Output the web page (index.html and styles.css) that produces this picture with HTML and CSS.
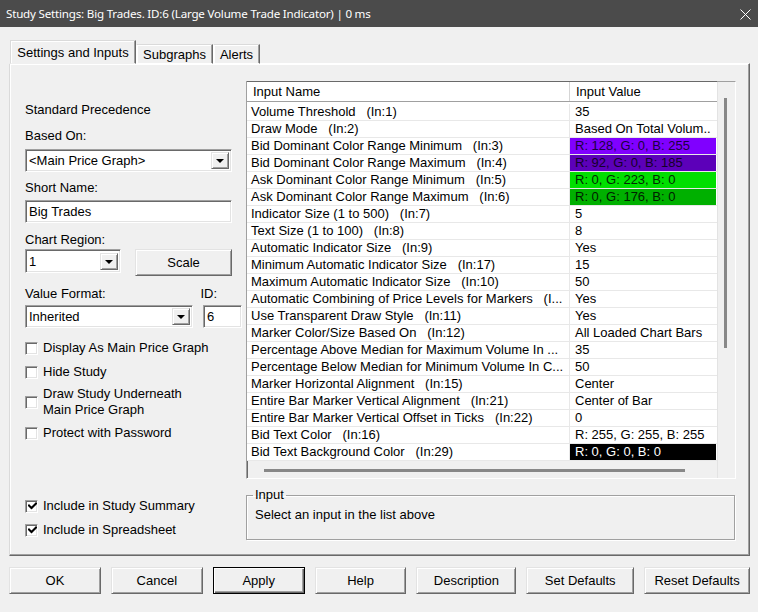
FILE: index.html
```html
<!DOCTYPE html>
<html>
<head>
<meta charset="utf-8">
<link rel="stylesheet" href="styles.css">
</head>
<body>
<div class="titlebar">
  <span class="title">Study Settings: Big Trades. ID:6 (Large Volume Trade Indicator) | 0 ms</span>
  <svg class="close" width="11" height="11" viewBox="0 0 11 11"><path d="M0.5 0.5 L10.5 10.5 M10.5 0.5 L0.5 10.5" stroke="#ffffff" stroke-width="1" fill="none"/></svg>
</div>
<div class="main">
  <div class="tabs">
    <div class="tab active w-settings">Settings and Inputs</div>
    <div class="tab w-subgraphs">Subgraphs</div>
    <div class="tab w-alerts">Alerts</div>
  </div>
  <div class="panel">
    <div class="leftcol">
      <div class="lbl precedence">Standard Precedence</div>
      <div class="lbl mt10">Based On:</div>
      <div class="select w-full mt5 h23"><span>&lt;Main Price Graph&gt;</span><i class="arrow"></i></div>
      <div class="lbl mt8">Short Name:</div>
      <div class="field w-full mt4 h23">Big Trades</div>
      <div class="lbl mt9">Chart Region:</div>
      <div class="row gaprow mt1">
        <div class="select w-region h24"><span>1</span><i class="arrow"></i></div>
        <div class="btn w-scale">Scale</div>
      </div>
      <div class="row mt10 lblrow">
        <div class="lbl">Value Format:</div>
        <div class="lbl idlbl">ID:</div>
      </div>
      <div class="row mt3">
        <div class="select w-format h23"><span>Inherited</span><i class="arrow"></i></div>
        <div class="field w-id h23">6</div>
      </div>
      <label class="cb mt12"><i class="box"></i><span>Display As Main Price Graph</span></label>
      <label class="cb mt8"><i class="box"></i><span>Hide Study</span></label>
      <label class="cb mt6"><i class="box"></i><span>Draw Study Underneath<br>Main Price Graph</span></label>
      <label class="cb mt7"><i class="box"></i><span>Protect with Password</span></label>
      <label class="cb mt57"><i class="box"><svg width="9" height="9" viewBox="0 0 9 9"><path d="M1 3.5 L3.5 6 L8 1.5" stroke="#000" stroke-width="2" fill="none" stroke-linecap="square"/></svg></i><span>Include in Study Summary</span></label>
      <label class="cb mt8"><i class="box"><svg width="9" height="9" viewBox="0 0 9 9"><path d="M1 3.5 L3.5 6 L8 1.5" stroke="#000" stroke-width="2" fill="none" stroke-linecap="square"/></svg></i><span>Include in Spreadsheet</span></label>
    </div>
    <div class="rightcol">
      <div class="list">
        <div class="listmain">
          <div class="hdr">
            <div class="c-name">Input Name</div>
            <div class="c-val">Input Value</div>
          </div>
          <div class="rows">
            <div class="r"><div class="c-name">Volume Threshold   (In:1)</div><div class="c-val">35</div></div>
            <div class="r"><div class="c-name">Draw Mode   (In:2)</div><div class="c-val">Based On Total Volum..</div></div>
            <div class="r"><div class="c-name">Bid Dominant Color Range Minimum   (In:3)</div><div class="c-val sw-purple">R: 128, G: 0, B: 255</div></div>
            <div class="r"><div class="c-name">Bid Dominant Color Range Maximum   (In:4)</div><div class="c-val sw-dpurple">R: 92, G: 0, B: 185</div></div>
            <div class="r"><div class="c-name">Ask Dominant Color Range Minimum   (In:5)</div><div class="c-val sw-green">R: 0, G: 223, B: 0</div></div>
            <div class="r"><div class="c-name">Ask Dominant Color Range Maximum   (In:6)</div><div class="c-val sw-dgreen">R: 0, G: 176, B: 0</div></div>
            <div class="r"><div class="c-name">Indicator Size (1 to 500)   (In:7)</div><div class="c-val">5</div></div>
            <div class="r"><div class="c-name">Text Size (1 to 100)   (In:8)</div><div class="c-val">8</div></div>
            <div class="r"><div class="c-name">Automatic Indicator Size   (In:9)</div><div class="c-val">Yes</div></div>
            <div class="r"><div class="c-name">Minimum Automatic Indicator Size   (In:17)</div><div class="c-val">15</div></div>
            <div class="r"><div class="c-name">Maximum Automatic Indicator Size   (In:10)</div><div class="c-val">50</div></div>
            <div class="r"><div class="c-name">Automatic Combining of Price Levels for Markers   (I...</div><div class="c-val">Yes</div></div>
            <div class="r"><div class="c-name">Use Transparent Draw Style   (In:11)</div><div class="c-val">Yes</div></div>
            <div class="r"><div class="c-name">Marker Color/Size Based On   (In:12)</div><div class="c-val">All Loaded Chart Bars</div></div>
            <div class="r"><div class="c-name">Percentage Above Median for Maximum Volume In ...</div><div class="c-val">35</div></div>
            <div class="r"><div class="c-name">Percentage Below Median for Minimum Volume In C...</div><div class="c-val">50</div></div>
            <div class="r"><div class="c-name">Marker Horizontal Alignment   (In:15)</div><div class="c-val">Center</div></div>
            <div class="r"><div class="c-name">Entire Bar Marker Vertical Alignment   (In:21)</div><div class="c-val">Center of Bar</div></div>
            <div class="r"><div class="c-name">Entire Bar Marker Vertical Offset in Ticks   (In:22)</div><div class="c-val">0</div></div>
            <div class="r"><div class="c-name">Bid Text Color   (In:16)</div><div class="c-val">R: 255, G: 255, B: 255</div></div>
            <div class="r"><div class="c-name">Bid Text Background Color   (In:29)</div><div class="c-val sw-black">R: 0, G: 0, B: 0</div></div>
          </div>
          <div class="hscroll"><div class="hthumb"></div></div>
        </div>
        <div class="vscroll"><div class="vthumb"></div></div>
      </div>
      <fieldset class="group">
        <legend>Input</legend>
        <div class="grouptext">Select an input in the list above</div>
      </fieldset>
    </div>
  </div>
  <div class="buttons">
    <div class="btn w92">OK</div>
    <div class="btn w92">Cancel</div>
    <div class="btn w92 default">Apply</div>
    <div class="btn w92">Help</div>
    <div class="btn w100">Description</div>
    <div class="btn w108">Set Defaults</div>
    <div class="btn w106">Reset Defaults</div>
  </div>
</div>
</body>
</html>
```

FILE: styles.css
```css
html, body {
  margin: 0;
  padding: 0;
}
body {
  width: 758px;
  height: 612px;
  overflow: hidden;
  background: #f0f0f0;
  font-family: "Liberation Sans", Arial, sans-serif;
  font-size: 13px;
  color: #000;
}
.titlebar {
  height: 27px;
  background: #4b4b4b;
  color: #fff;
  display: flex;
  align-items: center;
  justify-content: space-between;
  padding: 0 7px 0 6px;
  box-sizing: border-box;
}
.title {
  font-family: "Noto Sans", "Open Sans", sans-serif;
  font-size: 11.6px;
  letter-spacing: -0.2px;
  white-space: nowrap;
}
.close {
  display: block;
  margin-top: 1px;
}
.main {
  padding: 14px 8px 0 9px;
}
.tabs {
  display: flex;
  align-items: flex-end;
  height: 23px;
  padding-left: 1px;
  margin-bottom: -1px;
  position: relative;
  z-index: 1;
}
.tab {
  box-sizing: border-box;
  height: 20px;
  line-height: 20px;
  text-align: center;
  border-top: 1px solid #dadada;
  border-left: 1px solid #ffffff;
  border-right: 1px solid #696969;
  background: #f0f0f0;
  box-shadow: inset -1px 0 0 #a0a0a0, inset 1px 1px 0 #ffffff;
  border-bottom: 1px solid #ffffff;
  white-space: nowrap;
}
.tab.active {
  height: 24px;
  line-height: 23px;
  border-bottom: 1px solid #f0f0f0;
  border-left-color: #dadada;
}
.w-settings { width: 126px; }
.w-subgraphs { width: 77px; }
.w-alerts { width: 47px; }
.panel {
  box-sizing: border-box;
  width: 741px;
  height: 493px;
  border: 1px solid;
  border-color: #ffffff #696969 #696969 #dadada;
  box-shadow: inset -1px -1px 0 #a0a0a0, inset 1px 1px 0 #ffffff;
  display: grid;
  grid-template-columns: 217px 490px;
  column-gap: 4px;
  padding: 17px 0 0 15px;
  align-items: start;
}
.leftcol {
  display: flex;
  flex-direction: column;
}
.lbl {
  line-height: 16px;
  white-space: nowrap;
}
.precedence { margin-top: 21px; }
.mt1 { margin-top: 1px; }
.mt3 { margin-top: 3px; }
.mt4 { margin-top: 4px; }
.mt5 { margin-top: 5px; }
.mt6 { margin-top: 6px; }
.mt7 { margin-top: 7px; }
.mt8 { margin-top: 8px; }
.mt9 { margin-top: 9px; }
.mt10 { margin-top: 10px; }
.mt12 { margin-top: 12px; }
.mt57 { margin-top: 57px; }
.h23 { height: 23px; }
.h24 { height: 24px; }
.w-full { width: 207px; }
.w-region { width: 96px; }
.w-format { width: 168px; }
.w-id { width: 39px; }
.w-scale { width: 97px; height: 26px; }
.row {
  display: flex;
  align-items: flex-start;
  justify-content: space-between;
}
.row.gaprow {
  justify-content: flex-start;
  gap: 14px;
}
.lblrow .idlbl {
  margin-right: 25px;
}
.select, .field {
  box-sizing: border-box;
  background: #fff;
  border: 1px solid;
  border-color: #a0a0a0 #ffffff #ffffff #a0a0a0;
  box-shadow: inset 1px 1px 0 #696969, inset -1px -1px 0 #e3e3e3;
  display: flex;
  align-items: center;
  padding-left: 3px;
  white-space: nowrap;
}
.arrow {
  margin-left: auto;
  margin-right: 2px;
  box-sizing: border-box;
  width: 18px;
  height: 17px;
  background: #f0f0f0;
  border: 1px solid;
  border-color: #e3e3e3 #696969 #696969 #e3e3e3;
  box-shadow: inset 1px 1px 0 #ffffff, inset -1px -1px 0 #a0a0a0;
  display: flex;
  align-items: center;
  justify-content: center;
}
.arrow::after {
  content: "";
  width: 0;
  height: 0;
  border-left: 4px solid transparent;
  border-right: 4px solid transparent;
  border-top: 4px solid #000;
  margin-top: 1px;
}
.btn {
  box-sizing: border-box;
  height: 27px;
  background: #f0f0f0;
  border: 1px solid;
  border-color: #e3e3e3 #696969 #696969 #e3e3e3;
  box-shadow: inset 1px 1px 0 #ffffff, inset -1px -1px 0 #a0a0a0;
  display: flex;
  align-items: center;
  justify-content: center;
  white-space: nowrap;
}
.btn.default {
  border-color: #000;
  box-shadow: inset 1px 1px 0 #ffffff, inset -1px -1px 0 #696969, inset -2px -2px 0 #a0a0a0;
}
.cb {
  display: flex;
  align-items: center;
  gap: 5px;
  line-height: 16px;
}
.box {
  box-sizing: border-box;
  width: 13px;
  height: 13px;
  flex: none;
  background: #fff;
  border: 1px solid;
  border-color: #a0a0a0 #ffffff #ffffff #a0a0a0;
  box-shadow: inset 1px 1px 0 #696969, inset -1px -1px 0 #e3e3e3;
  display: flex;
  align-items: center;
  justify-content: center;
}
.box svg {
  display: block;
  margin-left: 1px;
}
.rightcol {
  display: flex;
  flex-direction: column;
}
.list {
  box-sizing: border-box;
  width: 490px;
  height: 398px;
  border: 1px solid;
  border-color: #a0a0a0 #ffffff #ffffff #a0a0a0;
  box-shadow: inset 1px 0 0 #696969;
  display: flex;
  background: #f0f0f0;
}
.listmain {
  width: 470px;
  display: flex;
  flex-direction: column;
}
.hdr {
  display: flex;
  height: 21px;
  box-sizing: border-box;
  background: #fff;
  border-bottom: 1px solid #a0a0a0;
  border-top: 1px solid #696969;
  margin-top: -1px;
}
.hdr .c-name {
  width: 323px;
  box-sizing: border-box;
  padding-left: 6px;
  border-right: 1px solid #d5d5d5;
  line-height: 20px;
}
.hdr .c-val {
  flex: 1;
  padding-left: 6px;
  line-height: 20px;
}
.rows {
  background: #fff;
  padding-top: 2px;
}
.r {
  display: flex;
  height: 17px;
  box-sizing: border-box;
  border-bottom: 1px solid #e8e8e8;
}
.r .c-name {
  width: 323px;
  box-sizing: border-box;
  padding-left: 4px;
  border-right: 1px solid #e8e8e8;
  line-height: 16px;
  white-space: pre;
  overflow: hidden;
}
.r .c-val {
  flex: 1;
  padding-left: 5px;
  margin-right: 1px;
  line-height: 16px;
  white-space: nowrap;
  overflow: hidden;
}
.sw-purple { background: #8000ff; color: #1a0040; }
.sw-dpurple { background: #5c00b9; color: #14002a; }
.sw-green { background: #00df00; color: #002a00; }
.sw-dgreen { background: #00b000; color: #002000; }
.sw-black { background: #000; color: #fff; }
.hscroll {
  padding: 8px 0 0 17px;
}
.hthumb {
  width: 421px;
  height: 3px;
  background: #888888;
}
.vscroll {
  flex: 1;
  border-left: 1px solid #e3e3e3;
  padding-top: 16px;
  padding-left: 6px;
}
.vthumb {
  width: 3px;
  height: 250px;
  background: #888888;
}
.group {
  box-sizing: border-box;
  width: 489px;
  margin: 8px 0 0 0;
  padding: 0 8px 16px 6px;
  border: 1px solid #a0a0a0;
  box-shadow: inset 1px 1px 0 #ffffff, 1px 1px 0 #ffffff;
  min-width: 0;
}
.group legend {
  padding: 0 2px;
  line-height: 16px;
}
.grouptext {
  margin-top: 4px;
  padding-left: 2px;
  line-height: 16px;
}
.buttons {
  display: flex;
  gap: 10px;
  margin-top: 11px;
}
.w92 { width: 92px; }
.w100 { width: 100px; }
.w108 { width: 108px; }
.w106 { width: 106px; }
```
